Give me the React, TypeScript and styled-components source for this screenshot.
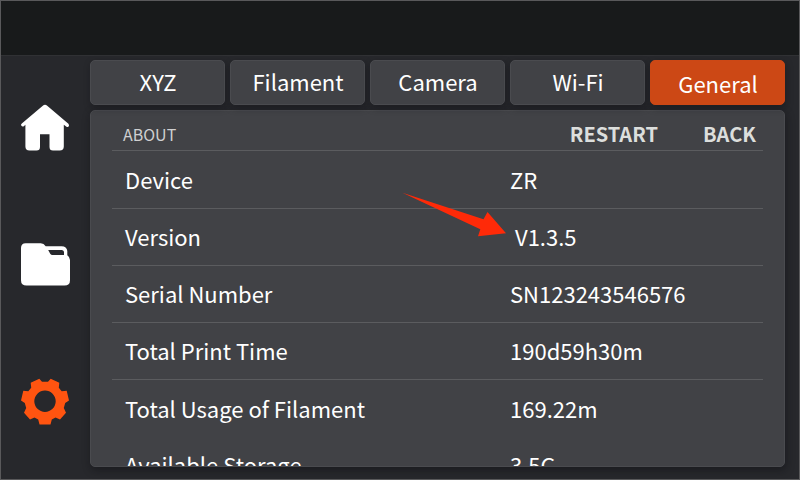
import React from "react";
import styled, { createGlobalStyle } from "styled-components";

const GlobalStyle = createGlobalStyle`
  * { box-sizing: border-box; }
  body { margin: 0; background: #26272b; }
`;

const Screen = styled.div`
  position: relative;
  width: 800px;
  height: 480px;
  display: flex;
  flex-direction: column;
  overflow: hidden;
  border: 1px solid #59595b;
  background: #27282c;
  color: #fff;
  font-family: "Noto Sans CJK SC", "Noto Sans", sans-serif;
`;

const StatusBar = styled.header`
  flex: 0 0 55px;
  background: #181a1b;
  border-bottom: 1px solid #303134;
`;

const Body = styled.div`
  flex: 1;
  min-height: 0;
  display: flex;
`;

const Sidebar = styled.nav`
  width: 89px;
  padding: 47px 0 0 19px;
  display: flex;
  flex-direction: column;
  gap: 86px;
`;

const NavIcon = styled.svg`
  display: block;
  width: 50px;
  height: 50px;
  flex: none;
`;

const Main = styled.main`
  width: 695px;
  padding-top: 4px;
`;

const Tabs = styled.div`
  display: grid;
  grid-template-columns: repeat(5, 135px);
  gap: 5px;
  height: 45px;
`;

const Tab = styled.button<{ $active?: boolean }>`
  padding: ${(p) => (p.$active ? "1px 0 0 1px" : "0 0 3px 1px")};
  border: 1px solid ${(p) => (p.$active ? "#cc4815" : "#4a4b4f")};
  border-radius: 5px;
  background: ${(p) => (p.$active ? "#cc4815" : "#414246")};
  box-shadow: 1px 3px 7px rgba(12, 12, 16, 0.35);
  color: #fff;
  font: 400 22px/40px "Noto Sans CJK SC", "Noto Sans", sans-serif;
`;

const Panel = styled.section`
  margin-top: 5px;
  height: 357px;
  padding: 0 21px;
  overflow: hidden;
  border: 1px solid #4a4b4f;
  border-radius: 5px;
  background: #414246;
  box-shadow: 1px 3px 8px rgba(12, 12, 16, 0.45);
`;

const PanelHeader = styled.div`
  display: flex;
  align-items: center;
  height: 40px;
  padding: 7px 7px 0 11px;
  border-bottom: 1px solid #5b5c5f;
`;

const Title = styled.span`
  flex: 1;
  color: #cfd0d1;
  font-size: 16px;
  line-height: 32px;
`;

const Action = styled.span`
  margin-left: 45px;
  color: #dcdedc;
  font-size: 20px;
  font-weight: 700;
  line-height: 32px;
`;

const Row = styled.div<{ $height?: number; $last?: boolean; $shift?: number }>`
  display: grid;
  grid-template-columns: 385px 1fr;
  height: ${(p) => p.$height ?? 57}px;
  padding: ${(p) => p.$shift ?? 0}px 0 0 13px;
  border-bottom: 1px solid ${(p) => (p.$last ? "transparent" : "#5b5c5f")};
  font-size: 22px;
  line-height: 54px;
  white-space: nowrap;
`;

const Value = styled.span<{ $indent?: number }>`
  padding-left: ${(p) => p.$indent ?? 0}px;
`;

const Pointer = styled.svg`
  position: absolute;
  left: 399px;
  top: 189px;
  width: 110px;
  height: 52px;
`;

const tabs = ["XYZ", "Filament", "Camera", "Wi-Fi", "General"];

const rows = [
  { label: "Device", value: "ZR", height: 58, shift: 1 },
  { label: "Version", value: "V1.3.5", indent: 5 },
  { label: "Serial Number", value: "SN123243546576" },
  { label: "Total Print Time", value: "190d59h30m" },
  { label: "Total Usage of Filament", value: "169.22m", last: true, shift: 1, height: 55 },
  { label: "Available Storage", value: "3.5G", last: true, shift: 2 },
];

const HomeIcon = () => (
  <NavIcon viewBox="0 0 50 50" fill="#fff">
    <path d="M22.8 2.8Q25 .8 27.2 2.8L48.4 20.7Q49.7 22.2 48.6 23.4Q47.2 24.6 45.5 23L43.8 21.8V43.5Q43.8 47.6 39.7 47.6H33Q29.5 47.6 29.5 44.1V31.3H20V44.1Q20 47.6 16.5 47.6H9.5Q5.4 47.6 5.4 43.5V21.8L4.1 22.9Q2.5 24 1.4 22.8Q.4 21.5 1.8 20.4Z" />
  </NavIcon>
);

const FolderIcon = () => (
  <NavIcon viewBox="0 0 50 50" fill="#fff">
    <path
      fillRule="evenodd"
      d="M5.7 4.3H20.8Q23.8 4.3 25.7 7.2H41.5Q46.8 7.2 47.3 12V16.2Q50 18 50 21V41.2Q50 46.6 44.5 46.6H6.5Q1 46.6 1 41.2V9Q1 4.3 5.7 4.3ZM28.2 11 30.2 14.7Q31 15.9 32.5 15.9H44V13.5Q44 11 41.5 11Z"
    />
  </NavIcon>
);

const GearIcon = () => (
  <NavIcon viewBox="0 0 50 50" fill="#ff5410">
    <path
      fillRule="evenodd"
      d="M22 6.7H28L30.7 3.7 39.3 7.7 38.8 12.7 41.7 16.2 46.7 15.8 49 25.5 45.2 28 43.8 33 46 37.7 40 44.5 35.5 42.5 31.8 44.5 30.5 49.6H19.5L18.2 44.5 14.5 42.5 10 44.5 4 37.7 6.2 33 4.8 28 1 25.5 3.3 15.8 8.3 16.2 11.2 12.7 10.7 7.7 19.3 3.7ZM25 15.6A10.7 10.7 0 1 0 25 37A10.7 10.7 0 1 0 25 15.6Z"
    />
  </NavIcon>
);

export default function App() {
  return (
    <>
      <GlobalStyle />
      <Screen>
        <StatusBar />
        <Body>
          <Sidebar>
            <HomeIcon />
            <FolderIcon />
            <GearIcon />
          </Sidebar>
          <Main>
            <Tabs>
              {tabs.map((tab) => (
                <Tab key={tab} $active={tab === "General"}>{tab}</Tab>
              ))}
            </Tabs>
            <Panel>
              <PanelHeader>
                <Title>ABOUT</Title>
                <Action>RESTART</Action>
                <Action>BACK</Action>
              </PanelHeader>
              {rows.map((row) => (
                <Row key={row.label} $height={row.height} $last={row.last} $shift={row.shift}>
                  <span>{row.label}</span>
                  <Value $indent={row.indent}>{row.value}</Value>
                </Row>
              ))}
            </Panel>
          </Main>
        </Body>
        <Pointer viewBox="0 0 110 52" fill="#ff2a08">
          <path d="M2.4 2.7 83.5 29.2 87.5 22 106 43.2 78 46.2 80.3 39.2Z" />
        </Pointer>
      </Screen>
    </>
  );
}
